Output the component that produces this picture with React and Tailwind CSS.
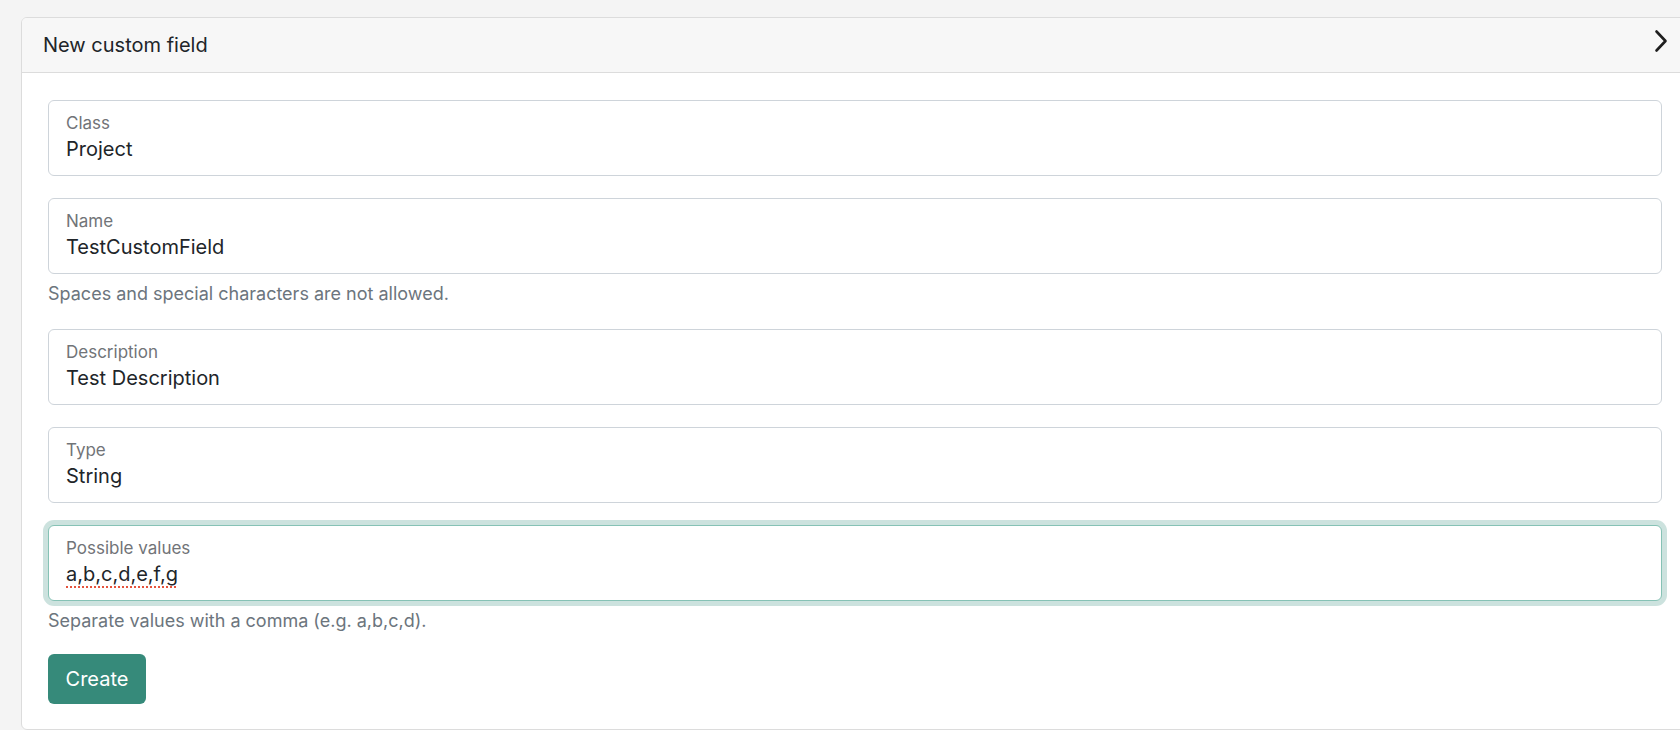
const fields = [
  { label: "Class", value: "Project" },
  { label: "Name", value: "TestCustomField", hint: "Spaces and special characters are not allowed." },
  { label: "Description", value: "Test Description" },
  { label: "Type", value: "String" },
  {
    label: "Possible values",
    value: "a,b,c,d,e,f,g",
    hint: "Separate values with a comma (e.g. a,b,c,d).",
    focused: true,
    misspelled: true,
  },
];

const Chevron = () => (
  <svg width="14" height="24" viewBox="0 0 14 24" fill="none" className="mb-[9px]">
    <path d="M2.5 2.5 L11.5 12 L2.5 21.5" stroke="#1f1f1f" strokeWidth="2.6" strokeLinecap="round" strokeLinejoin="round" />
  </svg>
);

const FloatingField = ({ label, value, hint, focused, misspelled }) => (
  <div className="mb-[22px]">
    <div
      className={`h-[76px] rounded-[6px] border bg-white px-[17px] pt-[12px] ${
        focused
          ? "border-[#86c2b5] shadow-[0_0_0_5px_rgba(53,138,122,0.25)]"
          : "border-[#ced4da]"
      }`}>
      <div className="text-[17px] leading-[21px] text-[#717478]">{label}</div>
      <div className="mt-[2px] text-[20px] leading-[26px] text-[#212529]">
        {misspelled ? (
          <span className="underline decoration-dotted decoration-[#e5533d] decoration-2 underline-offset-[5px]">
            {value}
          </span>
        ) : (
          value
        )}
      </div>
    </div>
    {hint && (
      <p className="mt-[7px] text-[18px] leading-[26px] text-[#6c757d]">{hint}</p>
    )}
  </div>
);

const App = () => {
  return (
    <div
      className="h-[730px] w-[1680px] overflow-hidden bg-[#f4f4f4] pt-[17px] pl-[21px]"
      style={{ fontFamily: "Inter, 'Noto Sans', sans-serif" }}>
      <div className="w-[1668px] overflow-hidden rounded-[6px] border border-[#dcdcdc] bg-white">
        <div className="flex h-[55px] items-center justify-between border-b border-[#dcdcdc] bg-[#f7f7f7] pl-[21px] pr-[20px]">
          <h2 className="text-[20px] font-normal text-[#212529]">New custom field</h2>
          <Chevron />
        </div>
        <div className="px-[26px] pt-[27px] pb-[25px]">
          {fields.map((f, i) => (
            <FloatingField key={i} {...f} />
          ))}
          <button className="-mt-[2px] h-[50px] w-[98px] rounded-[6px] bg-[#368a7a] text-[20px] text-white">
            Create
          </button>
        </div>
      </div>
    </div>
  );
};

export default App;
